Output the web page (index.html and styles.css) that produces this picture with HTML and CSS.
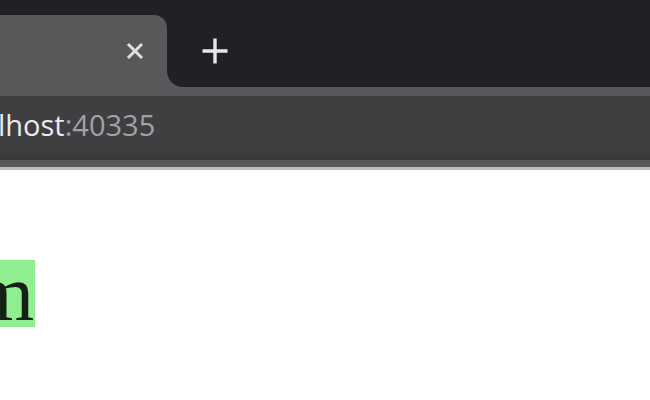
FILE: index.html
```html
<!DOCTYPE html>
<html>
<head>
<meta charset="utf-8">
<link rel="stylesheet" href="styles.css">
</head>
<body>
<div class="tabstrip">
  <div class="tab">
    <svg class="close" width="20" height="20" viewBox="0 0 20 20"><path d="M4 4 L16 16 M16 4 L4 16" stroke="#dedede" stroke-width="3" stroke-linecap="square"/></svg>
  </div>
  <div class="flare"></div>
  <svg class="newtab" width="26" height="26" viewBox="0 0 26 26"><path d="M13 0.5 V25.5 M0.5 13 H25.5" stroke="#e8e8e8" stroke-width="3.4"/></svg>
</div>
<div class="toolbar">
  <div class="omnibox"><span class="host">lhost</span><span class="port">:40335</span></div>
</div>
<div class="page">
  <span class="mark">m</span>
</div>
</body>
</html>
```
FILE: styles.css
```css
html, body {
  margin: 0;
  padding: 0;
  background: #ffffff;
  overflow: hidden;
}
.tabstrip {
  height: 87px;
  background: #202124;
  display: flex;
  align-items: flex-start;
}
.tab {
  width: 167px;
  height: 72px;
  margin-top: 15px;
  background: #58585a;
  border-top-right-radius: 13px;
  display: flex;
  justify-content: flex-end;
  align-items: flex-start;
  box-sizing: border-box;
  padding-top: 26px;
  padding-right: 22px;
}
.close {
  display: block;
}
.flare {
  width: 16px;
  height: 16px;
  align-self: flex-end;
  background: radial-gradient(circle at 100% 0, #202124 15.5px, #58585a 16.5px);
}
.newtab {
  display: block;
  margin-left: 19px;
  margin-top: 38px;
}
.toolbar {
  background: #58585a;
  padding: 9px 0 7px;
  border-bottom: 3px solid #bdbdbd;
}
.omnibox {
  height: 64px;
  box-sizing: border-box;
  background: linear-gradient(to bottom, #3f3e40 0, #3f3e40 57px, #3a393b 57px, #3a393b 64px);
  font-family: "Open Sans", "DejaVu Sans", sans-serif;
  font-size: 29px;
  line-height: 58px;
  padding-bottom: 6px;
  white-space: nowrap;
  margin-left: -2px;
}
.host {
  color: #e8eaed;
}
.port {
  color: #a2a2a5;
}
.page {
  padding-top: 90px;
}
.mark {
  display: inline-block;
  background: #90ee90;
  color: #142014;
  font-family: "Liberation Serif", "Times New Roman", serif;
  font-size: 80px;
  line-height: 66px;
  padding-bottom: 1px;
  vertical-align: top;
  margin-left: -28px;
  padding-right: 1px;
}
```
